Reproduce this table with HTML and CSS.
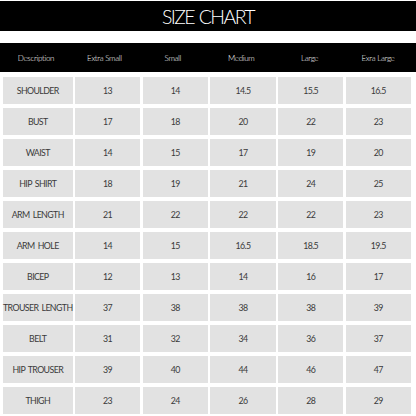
FILE: index.html
```html
<!DOCTYPE html>
<html>
<head>
<meta charset="utf-8">
<link rel="stylesheet" href="styles.css">
</head>
<body>
<div class="title">SIZE CHART</div>
<div class="head">
  <div class="grid">
    <div>Description</div><div>Extra Small</div><div>Small</div><div>Medium</div><div>Large</div><div>Exra Large</div>
  </div>
</div>
<div class="grid body">
  <div class="c">SHOULDER</div><div class="c">13</div><div class="c">14</div><div class="c">14.5</div><div class="c">15.5</div><div class="c">16.5</div>
  <div class="c">BUST</div><div class="c">17</div><div class="c">18</div><div class="c">20</div><div class="c">22</div><div class="c">23</div>
  <div class="c">WAIST</div><div class="c">14</div><div class="c">15</div><div class="c">17</div><div class="c">19</div><div class="c">20</div>
  <div class="c">HIP SHIRT</div><div class="c">18</div><div class="c">19</div><div class="c">21</div><div class="c">24</div><div class="c">25</div>
  <div class="c">ARM LENGTH</div><div class="c">21</div><div class="c">22</div><div class="c">22</div><div class="c">22</div><div class="c">23</div>
  <div class="c">ARM HOLE</div><div class="c">14</div><div class="c">15</div><div class="c">16.5</div><div class="c">18.5</div><div class="c">19.5</div>
  <div class="c">BICEP</div><div class="c">12</div><div class="c">13</div><div class="c">14</div><div class="c">16</div><div class="c">17</div>
  <div class="c">TROUSER LENGTH</div><div class="c">37</div><div class="c">38</div><div class="c">38</div><div class="c">38</div><div class="c">39</div>
  <div class="c">BELT</div><div class="c">31</div><div class="c">32</div><div class="c">34</div><div class="c">36</div><div class="c">37</div>
  <div class="c">HIP TROUSER</div><div class="c">39</div><div class="c">40</div><div class="c">44</div><div class="c">46</div><div class="c">47</div>
  <div class="c">THIGH</div><div class="c">23</div><div class="c">24</div><div class="c">26</div><div class="c">28</div><div class="c">29</div>
</div>
</body>
</html>
```
FILE: styles.css
```css
html, body { margin: 0; padding: 0; background: #fff; }
body { width: 416px; height: 416px; overflow: hidden; font-family: Lato, "Liberation Sans", sans-serif; }
.title {
  margin-top: 1px;
  height: 30px;
  background: #000;
  color: #fff;
  font-weight: 300;
  font-size: 19.5px;
  letter-spacing: -1.6px;
  word-spacing: 1px;
  display: flex;
  align-items: center;
  justify-content: center;
}
.head {
  margin-top: 12px;
  height: 29px;
  background: #000;
  color: #fff;
  display: flex;
  align-items: center;
}
.grid {
  width: 408px;
  margin-left: 3px;
  display: grid;
  grid-template-columns: repeat(6, 1fr);
  column-gap: 2.4px;
}
.head .grid div {
  text-align: center;
  font-size: 8px;
  font-weight: 300;
  letter-spacing: -0.3px;
  white-space: nowrap;
}
.body {
  margin-top: 5px;
  row-gap: 4px;
}
.c {
  height: 27px;
  background: #e2e2e2;
  color: #3a3a3a;
  font-size: 8.8px;
  letter-spacing: -0.6px;
  word-spacing: 1.5px;
  white-space: nowrap;
  display: flex;
  align-items: center;
  justify-content: center;
}
```
